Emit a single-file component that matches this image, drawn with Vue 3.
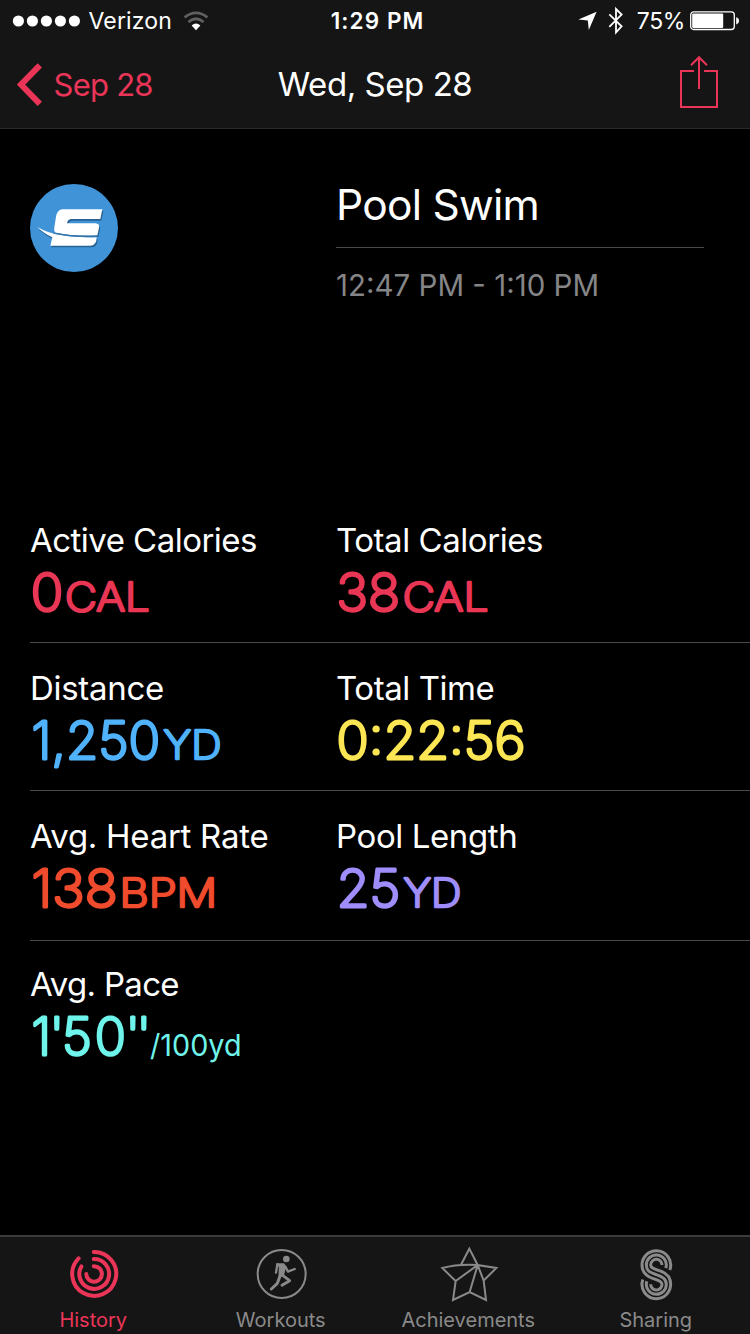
<script setup>
const rows = [
  [
    { label: 'Active Calories', spacing: -0.53, color: '#e93655', parts: [{ t: '0', x: 0.8, len: 32.6 }, { t: 'CAL', x: 35, len: 84.8, unit: true }] },
    { label: 'Total Calories', spacing: -0.45, color: '#e93655', parts: [{ t: '38', x: 0.6, len: 63.5 }, { t: 'CAL', x: 66.8, len: 85.6, unit: true }] },
  ],
  [
    { label: 'Distance', spacing: -0.3, color: '#4fb2fb', parts: [{ t: '1,250', x: 1.6, len: 128.6 }, { t: 'YD', x: 133.6, len: 57.8, unit: true }] },
    { label: 'Total Time', spacing: -0.44, color: '#fde653', parts: [{ t: '0:22:56', x: 0.6, len: 189 }] },
  ],
  [
    { label: 'Avg. Heart Rate', spacing: -0.27, color: '#f04b2d', parts: [{ t: '138', x: 1.6, len: 86 }, { t: 'BPM', x: 89.6, len: 97.5, unit: true }] },
    { label: 'Pool Length', spacing: -0.4, color: '#9e8dfa', parts: [{ t: '25', x: 0.8, len: 63.5 }, { t: 'YD', x: 67.4, len: 58, unit: true }] },
  ],
  [
    { label: 'Avg. Pace', spacing: -0.7, color: '#6ff4eb', parts: [{ t: "1'50''", x: '1.6 19.6 32 64.7 95.4 106.4' }, { t: '/100yd', x: 120, len: 91.5, small: true }] },
  ],
]
</script>

<template>
  <div class="screen">
    <header>
      <div class="status">
        <div class="side">
          <svg class="dots" width="70" height="14" viewBox="0 0 70 14" fill="#fff">
            <circle v-for="n in 5" :key="n" :cx="n * 14 - 7.6" cy="7" r="5.6" />
          </svg>
          <span class="carrier">Verizon</span>
          <svg class="wifi" width="26" height="20" viewBox="0 0 26 20" fill="none" stroke="#606060" stroke-width="2.8">
            <path d="M1.6 6.4Q13 -2.6 24.4 6.4" />
            <path d="M5.4 11Q13 4.6 20.6 11" />
            <path d="M8.6 14.6Q13 10.6 17.4 14.6L13 19.2Z" fill="#fff" stroke="none" />
          </svg>
        </div>
        <span class="clock">1:29 PM</span>
        <div class="side right">
          <svg class="loc" width="20" height="20" viewBox="0 0 20 20" fill="#fff"><path d="M18.6 .8L.4 8.6L9.8 9.6L10.8 19Z" /></svg>
          <svg class="bt" width="18" height="30" viewBox="0 0 18 30" fill="none" stroke="#fff" stroke-width="1.8"><path d="M2.3 8.3L14.6 20.4L9 26.4V3L14.6 8.6L2.3 20.8" /></svg>
          <span class="percent">75%</span>
          <svg width="50" height="20" viewBox="0 0 50 20">
            <rect x=".7" y=".9" width="43.6" height="17.6" rx="3" fill="none" stroke="#fff" stroke-width="1.3" />
            <rect x="2.2" y="2.4" width="31" height="14.6" rx="1.2" fill="#fff" />
            <path d="M46.2 6.2Q49 7 49 9.8T46.2 13.4Z" fill="#fff" />
          </svg>
        </div>
      </div>
      <nav>
        <a class="back">
          <svg width="28" height="46" viewBox="0 0 28 46" fill="none" stroke="#ea3558" stroke-width="6"><path d="M25.8 3.4L7 22.6L25.8 41.8" /></svg>
          <span>Sep 28</span>
        </a>
        <h1>Wed, Sep 28</h1>
        <a class="share">
          <svg width="40" height="54" viewBox="0 0 40 54" fill="none" stroke="#ea3558" stroke-width="2"><path d="M15 16H2V52H38V16H25M20 34V2M12 10.3L20 2.2L28 10.3" /></svg>
        </a>
      </nav>
    </header>

    <main>
      <section class="hero">
        <svg class="logo" width="88" height="88" viewBox="30 30 264 264">
          <circle cx="162" cy="162" r="132" fill="#3f93d6" />
          <g fill="#276292" transform="translate(3 5)">
            <path d="M126 106H247L241 135H153Q143 136 141 148H226Q240 149 237 161L232 184Q160 187 105 176Q101 170 103 160L108 128Q112 108 126 106Z" />
            <path d="M52 159Q84 178 120 182Q170 190 230 190Q230 214 212 215H91L97 190Q72 179 52 159Z" />
          </g>
          <g fill="#fff">
            <path d="M126 106H247L241 135H153Q143 136 141 148H226Q240 149 237 161L232 184Q160 187 105 176Q101 170 103 160L108 128Q112 108 126 106Z" />
            <path d="M52 159Q84 178 120 182Q170 190 230 190Q230 214 212 215H91L97 190Q72 179 52 159Z" />
          </g>
          <path d="M101 177Q160 190 233 187" fill="none" stroke="#3478b0" stroke-width="4" />
        </svg>
        <div class="info">
          <h2>Pool Swim</h2>
          <p>12:47 PM - 1:10 PM</p>
        </div>
      </section>

      <section class="stats">
        <div v-for="(row, i) in rows" :key="i" class="row">
          <div v-for="cell in row" :key="cell.label" class="cell">
            <div class="label" :style="{ letterSpacing: cell.spacing + 'px' }">{{ cell.label }}</div>
            <svg class="value" width="300" height="62" :style="{ color: cell.color }">
              <text
                v-for="p in cell.parts"
                :key="p.t"
                :class="{ unit: p.unit, small: p.small }"
                :x="p.x"
                :y="p.small ? 52 : 50.5"
                :textLength="p.len"
                lengthAdjust="spacingAndGlyphs"
              >{{ p.t }}</text>
            </svg>
          </div>
        </div>
      </section>
    </main>

    <footer>
      <a class="tab active">
        <svg width="56" height="56" viewBox="0 0 56 56" fill="none" stroke="currentColor" stroke-width="4" stroke-linecap="round">
          <path d="M27.8 5.9A22 22 0 1 1 12.6 12.4" />
          <path d="M27.8 13.1A14.9 14.9 0 1 1 15.4 20.4" />
          <path d="M27.8 20.2A7.8 7.8 0 1 1 20.3 28" />
        </svg>
        <span>History</span>
      </a>
      <a class="tab">
        <svg width="56" height="56" viewBox="-8 -6 168 168" fill="none" stroke="currentColor" stroke-linecap="round" stroke-linejoin="round">
          <circle cx="78" cy="78" r="72" stroke-width="6" />
          <circle cx="92" cy="33" r="10" fill="currentColor" stroke="none" />
          <path d="M64 48H84L89 56L83 80L71 86L72 56Z" fill="currentColor" stroke-width="5" />
          <path d="M65 49L61 74M89 56L97 71L117 63" stroke-width="7" />
          <path d="M74 82L65 106L47 123" stroke-width="9" />
          <path d="M78 80L102 98L79 112" stroke-width="8.5" />
        </svg>
        <span>Workouts</span>
      </a>
      <a class="tab">
        <svg width="60" height="56" viewBox="132 48 180 168" fill="none" stroke="currentColor" stroke-width="6" stroke-linejoin="miter">
          <path d="M198 104L223 56L248 105L304 114L266 152L273 210L224 186L174 210L182 153L142 114Q190 101 248 105L182 153M248 105L224 186M248 105L266 152" />
        </svg>
        <span>Achievements</span>
      </a>
      <a class="tab">
        <svg width="44" height="56" viewBox="0 0 132 168" fill="none" stroke="currentColor" stroke-width="9">
          <path d="M107.4 71.7A43 43 0 0 0 67 14A43 43 0 0 0 24 57C24 82 40 92 58 98S84 107 84 115A17 17 0 0 1 67 132A17 17 0 0 1 50 115" />
          <path d="M95.5 66.3A30 30 0 0 0 67 27A30 30 0 0 0 37 57C37 76 50 80 67 86S97 98 97 115A30 30 0 0 1 67 145A30 30 0 0 1 38.5 105.7" />
          <path d="M84 57A17 17 0 0 0 67 40A17 17 0 0 0 50 57C50 66 60 69 76 74S110 90 110 115A43 43 0 0 1 67 158A43 43 0 0 1 26.6 100.3" />
        </svg>
        <span>Sharing</span>
      </a>
    </footer>
  </div>
</template>

<style scoped>
.screen {
  width: 750px;
  height: 1334px;
  display: flex;
  flex-direction: column;
  overflow: hidden;
  background: #000;
  color: #fff;
  font-family: Inter, "Liberation Sans", sans-serif;
}
svg { display: block; flex: none; }
h1, h2, p { margin: 0; font-weight: 400; }
header {
  height: 128px;
  flex: none;
  background: #151515;
  border-bottom: 1px solid #29292b;
}
.status {
  height: 41px;
  display: grid;
  grid-template-columns: 1fr auto 1fr;
  align-items: center;
  font-size: 23px;
  line-height: 28px;
  white-space: nowrap;
}
.side { display: flex; align-items: center; padding-left: 12px; }
.side.right { justify-content: flex-end; padding: 0 10px 0 0; }
.carrier { margin-left: 6.5px; letter-spacing: 0.15px; }
.wifi { margin-left: 11px; }
.clock { font-weight: 600; font-size: 22.5px; letter-spacing: 1.1px; margin-left: 5px; }
.bt { margin: 0 12px 0 9px; }
.percent { letter-spacing: -0.4px; margin-right: 5px; }
nav {
  height: 87px;
  display: grid;
  grid-template-columns: 1fr auto 1fr;
  align-items: center;
}
.back {
  display: flex;
  align-items: center;
  gap: 11.5px;
  padding-left: 14px;
  font-size: 31px;
  letter-spacing: -0.75px;
  color: #ea3558;
}
h1 { font-size: 33px; letter-spacing: -0.45px; padding-bottom: 2px; }
.share { justify-self: end; padding: 0 31px 6px 0; }
main { flex: 1; padding-left: 30px; }
.hero { display: flex; height: 311px; padding-top: 55px; gap: 218px; }
.info { width: 368px; }
h2 {
  height: 63px;
  line-height: 42px;
  font-size: 42.5px;
  letter-spacing: -0.75px;
  border-bottom: 1px solid #4a4a4a;
}
.info p { margin-top: 19px; font-size: 29.5px; line-height: 36px; color: #858587; }
.row {
  display: grid;
  grid-template-columns: 306px 1fr;
  height: 147px;
  border-bottom: 1px solid #4a4a4a;
}
.cell { padding-top: 25px; }
.row:nth-child(3) { height: 149px; }
.row:nth-child(4) { border: 0; }
.row:nth-child(4) .cell { padding-top: 23px; }
.label { font-size: 33px; line-height: 40px; white-space: nowrap; }
.value text {
  fill: currentColor;
  stroke: currentColor;
  stroke-width: 3px;
  stroke-linejoin: round;
  font-size: 51.5px;
  font-weight: 200;
}
.value text.unit { font-size: 39.5px; stroke-width: 2.7px; }
.value text.small { font-size: 30px; font-weight: 400; stroke: none; }
footer {
  height: 97px;
  flex: none;
  display: grid;
  grid-template-columns: repeat(4, 1fr);
  background: #151515;
  border-top: 2px solid #3b3b3c;
}
.tab {
  display: flex;
  flex-direction: column;
  align-items: center;
  padding-top: 9px;
  color: #8a8a8a;
  font-size: 20px;
  line-height: 24px;
}
.tab span { margin-top: 6px; margin-left: -1px; }
.tab.active { color: #ea3558; }
</style>
<style>
body { background: #000; }
</style>
